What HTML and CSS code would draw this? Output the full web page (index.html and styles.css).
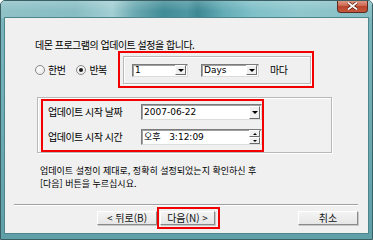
FILE: index.html
```html
<!DOCTYPE html>
<html lang="ko">
<head>
<meta charset="utf-8">
<link rel="stylesheet" href="styles.css">
</head>
<body>
<div class="window">
  <div class="titlebar">
    <div class="close">
      <svg width="13" height="8" viewBox="0 0 13 8"><path d="M2 0.5 L11 7.5 M11 0.5 L2 7.5" stroke="#5a1a10" stroke-width="3.2"/><path d="M2 0.5 L11 7.5 M11 0.5 L2 7.5" stroke="#fff" stroke-width="1.8"/></svg>
    </div>
  </div>
  <div class="frame">
    <div class="client">
      <p class="heading">데몬 프로그램의 업데이트 설정을 합니다.</p>
      <div class="row1">
        <div class="radios">
          <span class="radio"></span><span class="rlabel">한번</span>
          <span class="radio checked"></span><span class="rlabel">반복</span>
        </div>
        <div class="redbox rb1">
          <div class="group g1">
            <div class="combo c-num"><span class="val">1</span><span class="drop"><i class="tri"></i></span></div>
            <div class="combo c-days"><span class="val">Days</span><span class="drop"><i class="tri"></i></span></div>
            <span class="every">마다</span>
          </div>
        </div>
      </div>
      <div class="group g2">
        <div class="redbox rb2">
          <div class="frow">
            <span class="flabel">업데이트 시작 날짜</span>
            <div class="combo field"><span class="val">2007-06-22</span><span class="drop"><i class="tri"></i></span></div>
          </div>
          <div class="frow">
            <span class="flabel">업데이트 시작 시간</span>
            <div class="combo field"><span class="val">오후&nbsp;&nbsp;&nbsp;3:12:09</span><span class="spin"><span class="sb"><i class="tri up"></i></span><span class="sb"><i class="tri"></i></span></span></div>
          </div>
        </div>
      </div>
      <div class="note">
        <p class="nline">업데이트 설정이 제대로, 정확히 설정되었는지 확인하신 후</p>
        <p class="nline">[다음] 버튼을 누르십시요.</p>
      </div>
      <div class="sep"></div>
      <div class="buttons">
        <button class="btn b-back">&lt; 뒤로(B)</button>
        <div class="redbox rb3"><button class="btn b-next">다음(N) &gt;</button></div>
        <button class="btn b-cancel">취소</button>
      </div>
    </div>
  </div>
</div>
</body>
</html>
```

FILE: styles.css
```css
* { box-sizing: border-box; }
html, body { margin: 0; padding: 0; }
body {
  width: 373px; height: 240px; overflow: hidden;
  font-family: "Noto Sans CJK KR", "Noto Sans", sans-serif;
  font-size: 10px; letter-spacing: -0.5px; color: #000; background: #fff;
}
.window {
  width: 373px; height: 240px;
  display: flex; flex-direction: column;
  border: 1px solid #3a5f64;
  border-radius: 5px 5px 0 0;
  background: #6eadb5;
  overflow: hidden;
}
.titlebar {
  height: 17px; flex: none;
  display: flex; justify-content: flex-end; align-items: flex-start;
  background:
    linear-gradient(180deg, rgba(255,255,255,0.18), rgba(255,255,255,0) 60%),
    linear-gradient(90deg, #8fc2c7 0%, #86bdc3 20%, #a2cfd3 30%, #6aa9b1 36%, #3f8b96 44%, #4e97a2 50%, #3b8893 53%, #63acb6 60%, #7fc0c8 68%, #8fc7cd 80%, #86bec4 100%);
}
.close {
  width: 31px; height: 13px; margin: -1px 4px 0 0;
  border: 1px solid #5b2a22; border-top: none;
  border-radius: 0 0 4px 4px;
  background: linear-gradient(180deg, #e2a08e 0%, #cf6c55 45%, #b8442b 55%, #c65a3e 100%);
  display: flex; align-items: center; justify-content: center;
}
.frame {
  flex: 1; display: flex;
  padding: 0 4px 6px 4px;
  background: linear-gradient(180deg, #7ab5bc, #5f9fa8);
}
.client {
  flex: 1; background: #f0f0f0;
  outline: 1px solid #4d858c;
  padding-top: 21px;
  display: flex; flex-direction: column;
}
.heading { margin: 0 0 0 30px; line-height: 12px; height: 12px; white-space: nowrap; }
.row1 { display: flex; align-items: center; height: 37px; }
.radios { display: flex; align-items: center; margin-left: 30px; width: 83px; height: 12px; line-height: 12px; white-space: nowrap; flex: none; }
.radio {
  flex: none;
  width: 10px; height: 10px; border-radius: 50%;
  border: 1px solid #8a8a8a;
  background: radial-gradient(circle at 40% 40%, #fff, #e2e2e2);
  display: inline-flex; align-items: center; justify-content: center;
}
.radio.checked::after { content: ""; width: 4px; height: 4px; border-radius: 50%; background: #1a1a1a; }
.rlabel { margin: 0 11px 0 3px; }
.redbox { border: 2px solid #f20000; }
.rb1 { width: 196px; height: 37px; padding: 3px 1px 2px 3px; flex: none; }
.group { border: 1px solid #b9b9b9; box-shadow: inset 1px 1px 0 #fff, 1px 1px 0 #fff; }
.g1 { height: 100%; display: flex; align-items: center; padding: 0 0 0 8px; }
.combo {
  background: #fff;
  border: 1px solid #7b7b7b; border-right-color: #dcdcdc; border-bottom-color: #dcdcdc;
  box-shadow: inset 1px 1px 0 #a0a0a0;
  display: flex; align-items: center; justify-content: space-between;
  height: 13px; line-height: 11px; padding: 0 1px 0 2px;
}
.val { font-family: "DejaVu Sans", "Noto Sans CJK KR", sans-serif; font-size: 9px; letter-spacing: 0; white-space: pre; }
.c-num { width: 56px; margin-right: 13px; }
.c-days { width: 58px; margin-right: 11px; }
.drop, .sb {
  width: 11px; height: 10px;
  background: #f0f0f0;
  border: 1px solid; border-color: #fff #6b6b6b #6b6b6b #fff;
  display: flex; align-items: center; justify-content: center;
}
.tri { width: 0; height: 0; border-left: 3px solid transparent; border-right: 3px solid transparent; border-top: 3px solid #000; }
.tri.up { border-top: none; border-bottom: 2px solid #000; border-left-width: 2px; border-right-width: 2px; }
.spin { display: flex; flex-direction: column; }
.spin .sb { height: 7px; }
.spin .sb .tri { border-top-width: 2px; border-left-width: 2px; border-right-width: 2px; }
.spin .sb .tri.up { border-top-width: 0; }
.every { line-height: 12px; }
.g2 { margin: 9px 0 0 32px; width: 295px; height: 56px; padding: 1px 0 0 3px; }
.rb2 { width: 223px; height: 53px; padding: 3px 0 0 5px; display: flex; flex-direction: column; gap: 9px; }
.frow { display: flex; align-items: center; height: 16px; }
.flabel { width: 93px; line-height: 12px; white-space: nowrap; }
.field { width: 121px; height: 16px; }
.field .drop { height: 13px; }
.note { margin: 10.5px 0 0 35px; font-size: 9px; letter-spacing: 0; }
.nline { margin: 0; height: 13.5px; line-height: 13.5px; white-space: nowrap; }
.sep { margin: 13.5px 10px 0 9px; height: 2px; border-top: 1px solid #a0a0a0; border-bottom: 1px solid #fff; }
.buttons { display: flex; align-items: flex-start; margin: 1px 0 0 92px; }
.btn {
  font: inherit; font-size: 10px; line-height: 12px;
  height: 14px; padding: 0;
  background: linear-gradient(180deg, #f4f4f4, #e6e6e6);
  border: 1px solid; border-color: #fff #8a8a8a #8a8a8a #fff;
  box-shadow: 1px 1px 0 #c8c8c8;
  color: #111;
}
.b-back { width: 60px; margin-top: 4px; }
.rb3 { padding: 2px 3px 2px 1px; }
.b-next { width: 55px; display: block; }
.b-cancel { width: 60px; margin: 4px 0 0 78px; }
```
